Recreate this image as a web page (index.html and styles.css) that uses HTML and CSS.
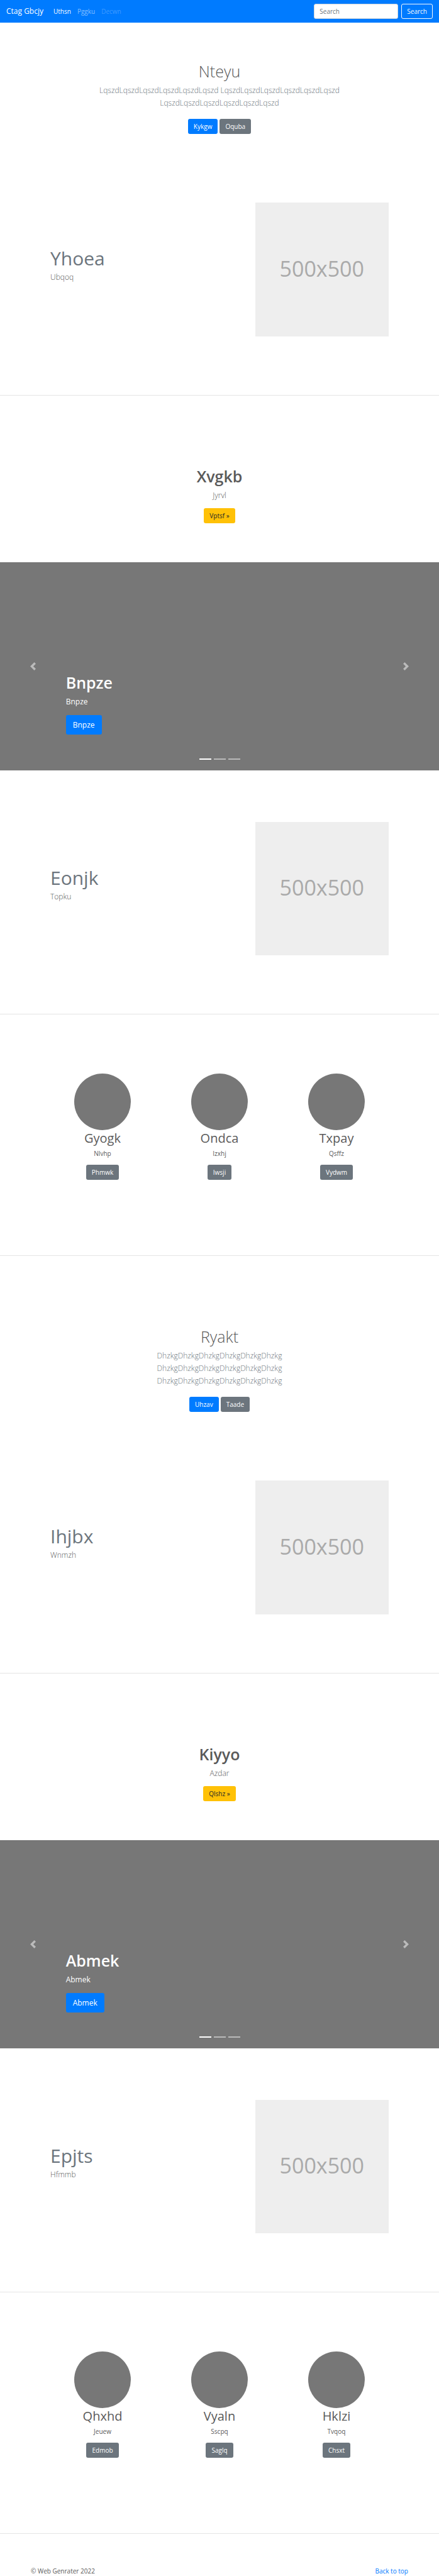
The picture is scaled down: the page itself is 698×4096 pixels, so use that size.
FILE: index.html
```html
<!DOCTYPE html>
<html lang="en">
<head>
<meta charset="utf-8">
<meta name="viewport" content="width=device-width, initial-scale=1">
<title>Ctag Gbcjy</title>
<link rel="stylesheet" href="styles.css">
</head>
<body>
<header class="navbar" id="top">
  <a class="navbar-brand" href="#top">Ctag Gbcjy</a>
  <nav class="navbar-nav">
    <a class="nav-link active" href="#top">Uthsn</a>
    <a class="nav-link" href="#top">Pggku</a>
    <a class="nav-link disabled" aria-disabled="true" href="#top">Decwn</a>
  </nav>
  <form class="search">
    <input class="search-input" type="search" placeholder="Search" aria-label="Search">
    <button class="btn btn-outline" type="button">Search</button>
  </form>
</header>

<main>
  <section class="hero hero-first">
    <h1 class="title title-light">Nteyu</h1>
    <p class="lead muted">LqszdLqszdLqszdLqszdLqszdLqszd LqszdLqszdLqszdLqszdLqszdLqszd<br>LqszdLqszdLqszdLqszdLqszdLqszd</p>
    <div class="actions">
      <a class="btn btn-primary" href="#top">Kykgw</a>
      <a class="btn btn-secondary" href="#top">Oquba</a>
    </div>
  </section>

  <section class="feature feature-after-hero">
    <div class="feature-text">
      <h2 class="feature-title">Yhoea</h2>
      <p class="lead">Ubqoq</p>
    </div>
    <div class="feature-media"><div class="placeholder">500x500</div></div>
  </section>
  <hr class="divider">

  <section class="hero callout">
    <h2 class="title">Xvgkb</h2>
    <p class="lead">Jyrvl</p>
    <div class="actions"><a class="btn btn-warning" href="#top">Vptsf »</a></div>
  </section>

  <section class="carousel">
    <button class="carousel-control" type="button" aria-label="Previous">
      <svg class="carousel-icon" viewBox="0 0 8 8" fill="currentColor"><path d="M5.25 0l-4 4 4 4 1.5-1.5L4.25 4l2.5-2.5L5.25 0z"/></svg>
    </button>
    <div class="carousel-caption">
      <h2 class="title">Bnpze</h2>
      <p class="caption-text">Bnpze</p>
      <a class="btn btn-primary btn-lg" href="#top">Bnpze</a>
    </div>
    <button class="carousel-control" type="button" aria-label="Next">
      <svg class="carousel-icon" viewBox="0 0 8 8" fill="currentColor"><path d="M2.75 0l-1.5 1.5L3.75 4l-2.5 2.5L2.75 8l4-4-4-4z"/></svg>
    </button>
    <div class="indicators"><span class="indicator current"></span><span class="indicator"></span><span class="indicator"></span></div>
  </section>

  <section class="feature">
    <div class="feature-text">
      <h2 class="feature-title">Eonjk</h2>
      <p class="lead">Topku</p>
    </div>
    <div class="feature-media"><div class="placeholder">500x500</div></div>
  </section>
  <hr class="divider">

  <section class="team">
    <article class="member">
      <div class="avatar"></div>
      <h2 class="member-name">Gyogk</h2>
      <p class="member-text">Nlvhp</p>
      <a class="btn btn-secondary" href="#top">Phmwk</a>
    </article>
    <article class="member">
      <div class="avatar"></div>
      <h2 class="member-name">Ondca</h2>
      <p class="member-text">Izxhj</p>
      <a class="btn btn-secondary" href="#top">Iwsji</a>
    </article>
    <article class="member">
      <div class="avatar"></div>
      <h2 class="member-name">Txpay</h2>
      <p class="member-text">Qsffz</p>
      <a class="btn btn-secondary" href="#top">Vydwm</a>
    </article>
  </section>
  <hr class="divider">

  <section class="hero">
    <h1 class="title title-light">Ryakt</h1>
    <p class="lead muted">DhzkgDhzkgDhzkgDhzkgDhzkgDhzkg<br>DhzkgDhzkgDhzkgDhzkgDhzkgDhzkg<br>DhzkgDhzkgDhzkgDhzkgDhzkgDhzkg</p>
    <div class="actions">
      <a class="btn btn-primary" href="#top">Uhzav</a>
      <a class="btn btn-secondary" href="#top">Taade</a>
    </div>
  </section>

  <section class="feature feature-after-hero">
    <div class="feature-text">
      <h2 class="feature-title">Ihjbx</h2>
      <p class="lead">Wnmzh</p>
    </div>
    <div class="feature-media"><div class="placeholder">500x500</div></div>
  </section>
  <hr class="divider">

  <section class="hero callout">
    <h2 class="title">Kiyyo</h2>
    <p class="lead">Azdar</p>
    <div class="actions"><a class="btn btn-warning" href="#top">Qlshz »</a></div>
  </section>

  <section class="carousel">
    <button class="carousel-control" type="button" aria-label="Previous">
      <svg class="carousel-icon" viewBox="0 0 8 8" fill="currentColor"><path d="M5.25 0l-4 4 4 4 1.5-1.5L4.25 4l2.5-2.5L5.25 0z"/></svg>
    </button>
    <div class="carousel-caption">
      <h2 class="title">Abmek</h2>
      <p class="caption-text">Abmek</p>
      <a class="btn btn-primary btn-lg" href="#top">Abmek</a>
    </div>
    <button class="carousel-control" type="button" aria-label="Next">
      <svg class="carousel-icon" viewBox="0 0 8 8" fill="currentColor"><path d="M2.75 0l-1.5 1.5L3.75 4l-2.5 2.5L2.75 8l4-4-4-4z"/></svg>
    </button>
    <div class="indicators"><span class="indicator current"></span><span class="indicator"></span><span class="indicator"></span></div>
  </section>

  <section class="feature">
    <div class="feature-text">
      <h2 class="feature-title">Epjts</h2>
      <p class="lead">Hfmmb</p>
    </div>
    <div class="feature-media"><div class="placeholder">500x500</div></div>
  </section>
  <hr class="divider">

  <section class="team">
    <article class="member">
      <div class="avatar"></div>
      <h2 class="member-name">Qhxhd</h2>
      <p class="member-text">Jeuew</p>
      <a class="btn btn-secondary" href="#top">Edmob</a>
    </article>
    <article class="member">
      <div class="avatar"></div>
      <h2 class="member-name">Vyaln</h2>
      <p class="member-text">Sscpq</p>
      <a class="btn btn-secondary" href="#top">Saglq</a>
    </article>
    <article class="member">
      <div class="avatar"></div>
      <h2 class="member-name">Hklzi</h2>
      <p class="member-text">Tvqoq</p>
      <a class="btn btn-secondary" href="#top">Chsxt</a>
    </article>
  </section>
  <hr class="divider">
</main>

<footer class="footer">
  <p>© Web Genrater 2022</p>
  <a class="footer-link" href="#top">Back to top</a>
</footer>
</body>
</html>
```
FILE: styles.css
```css
*, *::before, *::after { box-sizing: border-box; }

body {
  margin: 0;
  font-family: "Open Sans", "Noto Sans", sans-serif;
  font-size: 10px;
  line-height: 15px;
  color: #5a5a5a;
  background: #fff;
}

h1, h2, p { margin: 0; }
a { text-decoration: none; }

/* Navbar */
.navbar {
  display: flex;
  align-items: center;
  min-height: 36px;
  padding: 0 10px;
  background: #007bff;
}
.navbar-brand {
  margin-right: 16px;
  font-size: 12px;
  line-height: 20px;
  color: #fff;
}
.navbar-nav { display: flex; gap: 10px; }
.nav-link { color: rgba(255, 255, 255, .5); }
.nav-link.active { color: #fff; }
.nav-link.disabled { color: rgba(255, 255, 255, .25); }
.search { display: flex; gap: 5px; margin-left: auto; }
.search-input {
  width: 134px;
  height: 24px;
  padding: 0 8px;
  border: 1px solid #ced4da;
  border-radius: 3px;
  background: #fff;
  font: inherit;
  color: #495057;
}
.search-input::placeholder { color: #6c757d; opacity: 1; }

/* Buttons */
.btn {
  display: inline-block;
  padding: 4px 8px;
  border: 1px solid transparent;
  border-radius: 3px;
  font-family: inherit;
  font-size: 10px;
  font-weight: 400;
  line-height: 14px;
  color: #fff;
  background: transparent;
}
.btn-outline { border-color: #f8f9fa; color: #f8f9fa; }
.btn-primary { background: #007bff; }
.btn-secondary { background: #6c757d; }
.btn-warning { background: #ffc107; color: #212529; }
.btn-lg { padding: 5px 10px; font-size: 12px; line-height: 19px; }

/* Shared text */
.title {
  margin-bottom: 5px;
  font-size: 25px;
  font-weight: 600;
  line-height: 31px;
}
.title-light { font-weight: 300; }
.lead { font-size: 12px; font-weight: 300; line-height: 20px; }
.muted { color: #6c757d; }

/* Centered blocks */
.hero { padding: 113px 20px 0; text-align: center; }
.hero-first { padding-top: 62px; }
.actions {
  display: flex;
  justify-content: center;
  gap: 3px;
  margin-top: 15px;
}
.callout { padding-bottom: 62px; }
.callout .actions { margin-top: 10px; }

/* Text beside a picture */
.feature {
  display: grid;
  grid-template-columns: minmax(0, 7fr) minmax(0, 5fr);
  padding: 82px 70px 93px;
}
.feature-after-hero { padding-top: 109px; }
.feature-text { padding: 73px 10px 0; }
.feature-media { padding: 0 10px; }
.feature-title {
  margin-bottom: 4px;
  font-size: 30px;
  font-weight: 400;
  line-height: 32px;
  color: #6c757d;
}
.placeholder {
  display: flex;
  align-items: center;
  justify-content: center;
  aspect-ratio: 1;
  padding-bottom: 3px;
  background: #eee;
  font-size: 34px;
  line-height: 40px;
  color: #aaa;
}
.divider { margin: 0; border: 0; border-top: 1px solid #e5e5e5; }

/* Carousel */
.carousel {
  position: relative;
  display: grid;
  grid-template-columns: 15% minmax(0, 1fr) 15%;
  min-height: 331px;
  background: #777;
  color: #fff;
}
.carousel-control {
  display: flex;
  align-items: center;
  justify-content: center;
  padding: 0;
  border: 0;
  background: none;
  color: #fff;
  opacity: .5;
}
.carousel-icon { width: 13px; height: 13px; }
.carousel-caption { align-self: end; padding-bottom: 57px; }
.caption-text { margin-bottom: 11px; font-size: 12px; line-height: 20px; }
.carousel-caption .btn { display: block; width: fit-content; }
.indicators {
  position: absolute;
  right: 0;
  bottom: 17px;
  left: 0;
  display: flex;
  justify-content: center;
  gap: 4px;
}
.indicator { width: 19px; height: 2px; background: #fff; opacity: .5; }
.indicator.current { opacity: 1; }

/* Team */
.team {
  display: grid;
  grid-template-columns: repeat(3, minmax(0, 1fr));
  padding: 94px 70px 120px;
}
.member { display: flex; flex-direction: column; align-items: center; }
.avatar { width: 90px; height: 90px; border-radius: 50%; background: #777; }
.member-name { margin-bottom: 5px; font-size: 20px; font-weight: 400; line-height: 25px; }
.member-text { margin-bottom: 10px; }

/* Footer */
.footer { display: flex; justify-content: space-between; padding: 52px 49px 0; }
.footer-link { color: #007bff; }
```
